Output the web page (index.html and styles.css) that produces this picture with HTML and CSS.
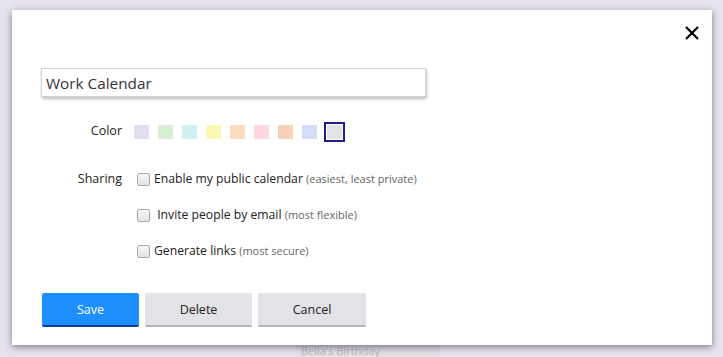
FILE: index.html
```html
<!DOCTYPE html>
<html lang="en">
<head>
  <meta charset="UTF-8">
  <title>Calendar Settings</title>
  <link rel="stylesheet" href="styles.css">
</head>
<body>

<div class="backdrop">
  <div class="behind">Bella's Birthday</div>
</div>

<div class="dialog">
  <button class="close-btn" aria-label="Close">
    <svg width="14" height="14" viewBox="0 0 14 14">
      <path d="M1 1 L13 13 M13 1 L1 13" stroke="#000" stroke-width="2.2" fill="none"/>
    </svg>
  </button>

  <input type="text" class="name-input" value="Work Calendar">

  <div class="row color-row">
    <span class="label">Color</span>
    <div class="swatches">
      <span class="swatch" style="background:#e2def0"></span>
      <span class="swatch" style="background:#d6efd2"></span>
      <span class="swatch" style="background:#d2eff3"></span>
      <span class="swatch" style="background:#fcf8b4"></span>
      <span class="swatch" style="background:#fbdcbc"></span>
      <span class="swatch" style="background:#fdd8e0"></span>
      <span class="swatch" style="background:#f9d1b8"></span>
      <span class="swatch" style="background:#d3ddf7"></span>
      <span class="swatch selected" style="background:#e3e3e3"></span>
    </div>
  </div>

  <div class="row sharing-row">
    <span class="label">Sharing</span>
    <div class="options">
      <label class="option"><span class="box"></span>Enable my public calendar <small>(easiest, least private)</small></label>
      <label class="option"><span class="box"></span> Invite people by email <small>(most flexible)</small></label>
      <label class="option"><span class="box"></span>Generate links <small>(most secure)</small></label>
    </div>
  </div>

  <div class="actions">
    <button class="btn save">Save</button>
    <button class="btn">Delete</button>
    <button class="btn cancel">Cancel</button>
  </div>
</div>

</body>
</html>
```

FILE: styles.css
```css
body {
  margin: 0;
  background-color: #e8e4ee;
  font-family: 'Open Sans', 'Noto Sans', sans-serif;
  color: #222;
  position: relative;
  width: 723px;
  height: 357px;
  overflow: hidden;
}

.backdrop {
  position: absolute;
  left: 0;
  top: 0;
  width: 723px;
  height: 357px;
}

.behind {
  position: absolute;
  left: 296px;
  top: 345px;
  width: 139px;
  height: 12px;
  background: linear-gradient(#d9d6de, #e6e3ea);
  color: #b9b7be;
  font-size: 11px;
  padding-left: 5px;
  line-height: 12px;
}

.dialog {
  position: relative;
  margin: 10px 0 0 12px;
  width: 700px;
  height: 335px;
  background: #fff;
  box-shadow: 0 2px 7px rgba(40, 30, 60, 0.55);
  padding: 58px 0 0 29px;
  box-sizing: border-box;
}

.close-btn {
  position: absolute;
  top: 16px;
  right: 13px;
  background: none;
  border: none;
  padding: 0;
  cursor: pointer;
}

.name-input {
  display: block;
  width: 385px;
  height: 29px;
  box-sizing: border-box;
  border: 1px solid #d2d2d2;
  box-shadow: 1px 2px 3px rgba(0,0,0,0.25);
  padding: 0 4px;
  font-family: inherit;
  font-size: 15.3px;
  color: #333;
  margin: 0 0 24px 0;
}

.row {
  display: flex;
  gap: 12px;
}

.label {
  width: 81px;
  text-align: right;
  font-size: 12.5px;
  color: #222;
  flex-shrink: 0;
}

.color-row .label {
  line-height: 20px;
}

.swatches {
  display: flex;
  gap: 9px;
  padding-top: 4px;
}

.swatch {
  width: 15px;
  height: 14px;
  display: block;
}

.swatch.selected {
  outline: 2px solid #1e1e8c;
  outline-offset: 1px;
  margin-left: 1px;
}

.sharing-row {
  margin-top: 28px;
}

.sharing-row .label {
  line-height: 20px;
}

.options {
  display: flex;
  flex-direction: column;
  gap: 16px;
  padding-left: 3px;
}

.option {
  display: flex;
  align-items: center;
  font-size: 12.2px;
  line-height: 20px;
  color: #222;
  white-space: pre;
}

.option small {
  font-size: 11px;
  color: #666;
}

.box {
  width: 11px;
  height: 11px;
  border: 1px solid #a8a8a8;
  border-radius: 2px;
  background: linear-gradient(#f6f6f6, #e4e4e4);
  margin-right: 4px;
  flex-shrink: 0;
}

.actions {
  display: flex;
  gap: 6px;
  margin-top: 32px;
  padding-left: 1px;
}

.btn {
  height: 34px;
  border: none;
  border-radius: 2px;
  background: #e3e2e7;
  border-bottom: 2px solid #b4b3ba;
  font-family: inherit;
  font-size: 12.5px;
  color: #222;
  cursor: pointer;
  width: 107px;
}

.btn.save {
  background: #1e8fff;
  border-bottom-color: #0a3f9e;
  color: #fff;
  width: 97px;
}

.btn.cancel {
  width: 108px;
}
```
